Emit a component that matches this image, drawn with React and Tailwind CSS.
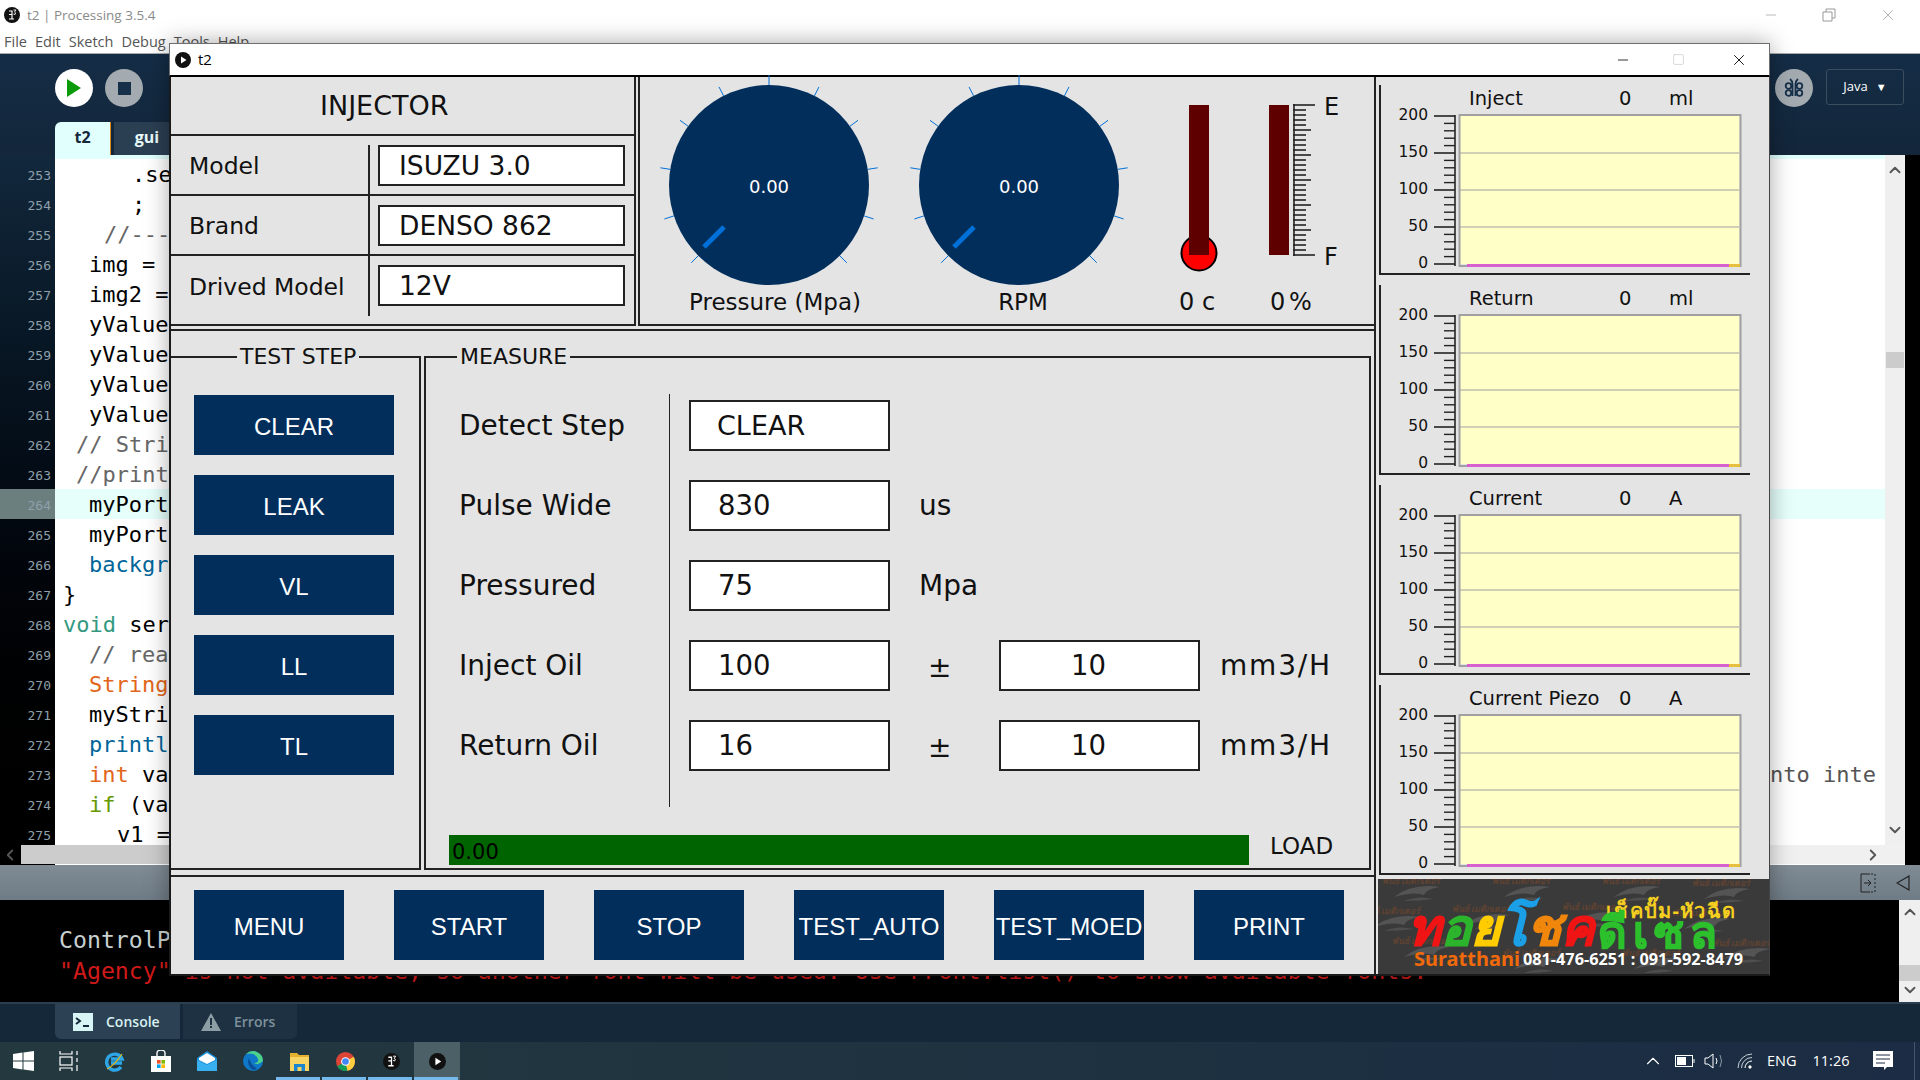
import { Minus, X, Square, ChevronUp, ChevronDown, ChevronLeft, ChevronRight } from "lucide-react";

const codeLines = [
  { n: 253, col: 5, parts: [[".setColor", "text-black"]] },
  { n: 254, col: 5, parts: [[";", "text-black"]] },
  { n: 255, col: 3, parts: [["//-----------", "text-[#666666]"]] },
  { n: 256, col: 2, parts: [["img = loadImage", "text-black"]] },
  { n: 257, col: 2, parts: [["img2 = loadImage", "text-black"]] },
  { n: 258, col: 2, parts: [["yValue1", "text-black"]] },
  { n: 259, col: 2, parts: [["yValue2", "text-black"]] },
  { n: 260, col: 2, parts: [["yValue3", "text-black"]] },
  { n: 261, col: 2, parts: [["yValue4", "text-black"]] },
  { n: 262, col: 1, parts: [["// String", "text-[#666666]"]] },
  { n: 263, col: 1, parts: [["//println", "text-[#666666]"]] },
  { n: 264, col: 2, parts: [["myPort.write", "text-black"]], active: true },
  { n: 265, col: 2, parts: [["myPort.clear", "text-black"]] },
  { n: 266, col: 2, parts: [["background", "text-[#006699]"]] },
  { n: 267, col: 0, parts: [["}", "text-black"]] },
  { n: 268, col: 0, parts: [["void", "text-[#33997e]"], [" serialEvent", "text-black"]] },
  { n: 269, col: 2, parts: [["// read", "text-[#666666]"]] },
  { n: 270, col: 2, parts: [["String", "text-[#e2661a]"], [" myString", "text-black"]] },
  { n: 271, col: 2, parts: [["myString", "text-black"]] },
  { n: 272, col: 2, parts: [["println", "text-[#006699]"]] },
  { n: 273, col: 2, parts: [["int", "text-[#e2661a]"], [" val", "text-black"]], tail: "nto inte" },
  { n: 274, col: 2, parts: [["if", "text-[#669900]"], [" (val", "text-black"]] },
  { n: 275, col: 4, parts: [["v1 = val", "text-black"]] },
];

const colPad = ["pl-[8px]", "pl-[21px]", "pl-[34px]", "pl-[49px]", "pl-[62px]", "pl-[77px]"];

function PlayBadge({ size = 16 }) {
  return (
    <svg width={size} height={size} viewBox="0 0 16 16">
      <circle cx="8" cy="8" r="8" fill="#111" />
      <path d="M6 4.5 L11.5 8 L6 11.5 Z" fill="#fff" />
    </svg>
  );
}

function P3Badge({ size = 16 }) {
  return (
    <svg width={size} height={size} viewBox="0 0 16 16">
      <circle cx="8" cy="8" r="8" fill="#111" />
      <path d="M5 4 H8 V12 M5 12 H10 M5 7.5 H8" stroke="#fff" strokeWidth="1.2" fill="none" />
      <path d="M9.5 3 H12 L10.5 5 Q12.5 5.5 11 7.5 L9.5 7" stroke="#fff" strokeWidth="0.9" fill="none" />
    </svg>
  );
}

function Code() {
  return (
    <div className="flex h-[710px] bg-black">
      <div className="w-[55px] bg-gradient-to-b from-[#12283c] to-black pt-[4px]">
        {codeLines.map((l) => (
          <div
            key={l.n}
            className={`h-[30px] pt-[9px] pr-[4px] text-right text-[13px] leading-[16px] font-['DejaVu_Sans_Mono',monospace] text-[#8fa0ab] ${l.active ? "bg-[#6b7f7f]" : ""}`}
          >
            {l.n}
          </div>
        ))}
      </div>
      <div className="w-[1850px] bg-white flex flex-col">
        <div className="flex-1 flex min-h-0">
          <div className="w-[1830px] overflow-hidden border-t-[4px] border-[#e0fffd]">
            {codeLines.map((l) => (
              <div
                key={l.n}
                className={`h-[30px] pt-[1px] flex whitespace-pre text-[22px] leading-[30px] font-['DejaVu_Sans_Mono',monospace] ${colPad[l.col]} ${l.active ? "bg-[#e6fffb]" : ""}`}
              >
                {l.parts.map(([t, c], i) => (
                  <span key={i} className={c}>{t}</span>
                ))}
                {l.tail && <span className="ml-auto w-[115px] text-[#555555]">{l.tail}</span>}
              </div>
            ))}
          </div>
          <div className="w-[20px] shrink-0 bg-[#efefef] flex flex-col items-center justify-between py-[6px] relative">
            <ChevronUp size={18} strokeWidth={2.5} className="text-[#555]" />
            <div className="absolute top-[197px] w-[18px] h-[16px] bg-[#cccccc]" />
            <ChevronDown size={18} strokeWidth={2.5} className="text-[#555]" />
          </div>
        </div>
        <div className="h-[20px] bg-[#f0f0f0] flex items-center justify-between border-b border-white">
          <div className="flex items-center h-full">
            <ChevronLeft size={18} strokeWidth={2.5} className="text-[#555] -ml-[54px] mr-[36px] relative z-10" />
            <div className="w-[800px] h-full bg-[#cccccc] -ml-[34px]" />
          </div>
          <ChevronRight size={18} strokeWidth={2.5} className="text-[#555] mr-[23px]" />
        </div>
      </div>
    </div>
  );
}

function Ide() {
  return (
    <div className="flex flex-col h-[1080px]">
      <div className="h-[30px] bg-white flex items-center pl-[4px] gap-[7px]">
        <P3Badge />
        <span className="text-[13.5px] text-[#8a8a8a] font-['Open_Sans',sans-serif]">t2 | Processing 3.5.4</span>
        <div className="ml-auto flex items-center text-[#999]">
          <Minus size={16} strokeWidth={1} className="mr-[43px]" />
          <svg width="14" height="14" viewBox="0 0 14 14" className="mr-[43px]" fill="none" stroke="#999">
            <path d="M1 4 H10 V13 H1 Z M4 4 V1 H13 V10 H10" />
          </svg>
          <X size={18} strokeWidth={1} className="mr-[23px]" />
        </div>
      </div>
      <div className="h-[24px] bg-white border-b border-[#aaaaaa] flex items-center pl-[4px] gap-[8px] text-[14.5px] text-[#555] font-['Open_Sans',sans-serif]">
        <span>File</span><span>Edit</span><span>Sketch</span><span>Debug</span><span>Tools</span><span>Help</span>
      </div>
      <div className="h-[101px] bg-gradient-to-b from-[#142d46] to-[#13263a] flex flex-col">
        <div className="flex-1 flex items-start pt-[15px] pl-[55px]">
          <div className="w-[38px] h-[38px] rounded-full bg-white flex items-center justify-center">
            <svg width="14" height="18" viewBox="0 0 14 18"><path d="M0 0 L14 9 L0 18 Z" fill="#0a9a0a" /></svg>
          </div>
          <div className="ml-[12px] w-[38px] h-[38px] rounded-full bg-[#a3abb1] flex items-center justify-center">
            <div className="w-[13px] h-[13px] bg-[#16304a]" />
          </div>
          <div className="ml-auto w-[38px] h-[38px] rounded-full bg-[#a3abb1] flex items-center justify-center mr-[13px]">
            <svg width="24" height="24" viewBox="0 0 24 24" fill="none" stroke="#16304a" strokeWidth="1.8">
              <circle cx="6.5" cy="10" r="2.8" /><circle cx="6.5" cy="17" r="2.8" /><circle cx="17.5" cy="10" r="2.8" /><circle cx="17.5" cy="17" r="2.8" />
              <path d="M8 3 Q10.5 5 10.5 8 V20 M16 3 Q13.5 5 13.5 8 V20" />
            </svg>
          </div>
          <div className="w-[78px] h-[36px] mr-[16px] border border-[#3c4e5e] rounded-[3px] flex items-center justify-center gap-[8px] text-white text-[13px] font-['Open_Sans',sans-serif]">
            Java <span className="text-[11px]">▼</span>
          </div>
        </div>
        <div className="h-[33px] flex pl-[55px] gap-[3px] text-[16px] font-bold font-['Open_Sans',sans-serif]">
          <div className="w-[56px] bg-[#e0fffd] rounded-tl-[6px] border-r border-[#e2861a] text-center leading-[30px] text-[#15283a]">t2</div>
          <div className="w-[66px] bg-[#2a3f52] text-center leading-[30px] text-[#e8fafa]">gui</div>
        </div>
      </div>
      <Code />
      <div className="h-[35px] bg-gradient-to-b from-[#7f8b95] to-[#6f7b85] flex items-center justify-end pr-[10px] gap-[20px]">
        <svg width="16" height="20" viewBox="0 0 16 20" fill="none" stroke="#222" strokeWidth="1">
          <path d="M10 1 H1 V19 H10" /><path d="M11 1 H15 V19 H11" strokeDasharray="2 2" /><path d="M4 10 H11 M8 7 L11 10 L8 13" />
        </svg>
        <svg width="14" height="16" viewBox="0 0 14 16" fill="none" stroke="#222" strokeWidth="1.2"><path d="M13 1 V15 L1 8 Z" /></svg>
      </div>
      <div className="h-[102px] bg-black flex">
        <div className="flex-1 pl-[59px] pt-[24px] text-[23.2px] leading-[31px] whitespace-pre font-['DejaVu_Sans_Mono',monospace] overflow-hidden">
          <div className="text-[#c8d0d0]">ControlP5 2.2.6 infos, comments, questions at http://www.sojamo.de/libraries/controlP5</div>
          <div className="text-[#d01a1a]">"Agency" is not available, so another font will be used. Use PFont.list() to show available fonts.</div>
        </div>
        <div className="w-[21px] bg-[#efefef] flex flex-col items-center justify-between py-[3px] relative">
          <ChevronUp size={18} strokeWidth={2.5} className="text-[#555]" />
          <div className="absolute top-[65px] w-[21px] h-[16px] bg-[#cccccc]" />
          <ChevronDown size={18} strokeWidth={2.5} className="text-[#555]" />
        </div>
      </div>
      <div className="h-[40px] bg-[#15283a] border-t-[2px] border-[#2a3f50] pl-[55px] flex gap-[3px] font-['Open_Sans',sans-serif] text-[14px]">
        <div className="w-[125px] h-[35px] bg-[#2c4254] rounded-bl-[6px] flex items-center pl-[18px] gap-[13px] text-[#d8f0f0] font-semibold">
          <svg width="20" height="18" viewBox="0 0 20 18">
            <rect width="20" height="18" fill="#d8f5f5" />
            <path d="M3 5 L7 8 L3 11 M10 13 H16" stroke="#15283a" strokeWidth="2" fill="none" />
          </svg>
          Console
        </div>
        <div className="w-[114px] h-[35px] bg-[#1d3142] rounded-br-[6px] flex items-center pl-[18px] gap-[13px] text-[#7f919c] font-semibold">
          <svg width="20" height="18" viewBox="0 0 20 18">
            <path d="M10 0 L20 18 H0 Z" fill="#8c9da3" />
            <rect x="9" y="5" width="2" height="7" fill="#1d3142" /><rect x="9" y="13" width="2" height="2" fill="#1d3142" />
          </svg>
          Errors
        </div>
      </div>
      <Taskbar />
    </div>
  );
}

function Cell({ children, on, active }) {
  return (
    <div className={`w-[46px] h-[38px] flex items-center justify-center relative ${active ? "bg-[#4c6068]" : ""}`}>
      {children}
      {on && <div className="absolute bottom-0 left-0 right-[2px] h-[3px] bg-[#76b9ed]" />}
    </div>
  );
}

function Taskbar() {
  return (
    <div className="h-[38px] bg-gradient-to-r from-[#24393f] via-[#1e3240] to-[#1b2c44] flex items-center">
      <Cell>
        <svg width="21" height="20" viewBox="0 0 21 20" fill="#fff">
          <path d="M0 3 L9.5 1.6 V9.5 H0 Z M10.5 1.4 L21 0 V9.5 H10.5 Z M0 10.5 H9.5 V18.4 L0 17 Z M10.5 10.5 H21 V20 L10.5 18.6 Z" />
        </svg>
      </Cell>
      <Cell>
        <svg width="20" height="20" viewBox="0 0 20 20" fill="none" stroke="#fff" strokeWidth="1.2">
          <path d="M1 0 V3 H13 V0 M1 20 V17 H13 V20" /><rect x="1" y="6" width="12" height="8" /><path d="M18 0 V4 M18 7 V11 M18 14 V20" />
        </svg>
      </Cell>
      <Cell>
        <svg width="20" height="22" viewBox="0 0 20 22">
          <path d="M16 17 A8 8 0 1 1 17 9 H6 M6 13 H17" fill="none" stroke="#2ea6e6" strokeWidth="3.4" />
          <path d="M2 19 Q9 16 17 4" fill="none" stroke="#e8b90f" strokeWidth="1.2" />
        </svg>
      </Cell>
      <Cell>
        <svg width="20" height="22" viewBox="0 0 20 22">
          <path d="M6 7 V3 A4 3 0 0 1 14 3 V7" fill="none" stroke="#fff" strokeWidth="1.4" />
          <rect y="6" width="20" height="16" fill="#fff" />
          <rect x="6" y="10" width="3.6" height="3.6" fill="#f25022" /><rect x="10.4" y="10" width="3.6" height="3.6" fill="#7fba00" />
          <rect x="6" y="14.4" width="3.6" height="3.6" fill="#00a4ef" /><rect x="10.4" y="14.4" width="3.6" height="3.6" fill="#ffb900" />
        </svg>
      </Cell>
      <Cell>
        <svg width="20" height="20" viewBox="0 0 20 20">
          <path d="M0 7 L10 0 L20 7 V20 H0 Z" fill="#1b8fd8" />
          <path d="M2 7 L10 2 L18 7 V9 L10 13 L2 9 Z" fill="#fff" />
          <path d="M0 9 L10 14 L20 9 V20 H0 Z" fill="#39b0f0" />
        </svg>
      </Cell>
      <Cell>
        <svg width="20" height="20" viewBox="0 0 20 20">
          <circle cx="10" cy="10" r="10" fill="#0f78c8" />
          <path d="M20 10 A10 10 0 0 0 3 3 Q12 1 15 8 Q16 12 11 12 Q15 15 20 10 Z" fill="#4cd08a" />
          <path d="M10 19 Q3 14 6 7 Q8 15 14 17 Q12 19 10 19 Z" fill="#0a4f96" />
        </svg>
      </Cell>
      <Cell on>
        <svg width="19" height="19" viewBox="0 0 19 19">
          <path d="M0 1 H7 L9 3 H19 V6 H0 Z" fill="#e5b12e" />
          <rect y="5" width="19" height="14" fill="#f7d565" />
          <rect x="4" y="12" width="11" height="7" fill="#1a86d0" /><rect x="7.5" y="15" width="4" height="4" fill="#f7d565" />
        </svg>
      </Cell>
      <Cell on>
        <svg width="19" height="19" viewBox="0 0 20 20">
          <circle cx="10" cy="10" r="10" fill="#db4437" />
          <path d="M10 10 L1.4 15 A10 10 0 0 0 12 19.8 Z" fill="#0f9d58" />
          <path d="M10 10 L18.6 5 A10 10 0 0 1 12 19.8 Z" fill="#ffcd40" />
          <circle cx="10" cy="10" r="4.6" fill="#fff" /><circle cx="10" cy="10" r="3.5" fill="#4285f4" />
        </svg>
      </Cell>
      <Cell on><P3Badge size={17} /></Cell>
      <Cell on active><PlayBadge size={17} /></Cell>
      <div className="ml-auto flex items-center h-full text-white font-['Open_Sans',sans-serif] text-[14.5px] relative w-[281px]">
        <div className="w-[28px] flex justify-center"><ChevronUp size={22} strokeWidth={1.2} /></div>
        <svg width="20" height="12" viewBox="0 0 20 12" className="ml-[8px]" fill="none" stroke="#fff">
          <rect x="0.5" y="0.5" width="17" height="11" /><rect x="2" y="2" width="9" height="8" fill="#fff" stroke="none" /><path d="M19 4 V8" />
        </svg>
        <svg width="20" height="16" viewBox="0 0 20 16" className="ml-[9px]" fill="none" stroke="#fff">
          <path d="M1 5 H4 L9 1 V15 L4 11 H1 Z" /><path d="M12 5 Q14 8 12 11" /><path d="M16 2 Q19 8 16 14" stroke="#8899a8" />
        </svg>
        <svg width="16" height="16" viewBox="0 0 16 16" className="ml-[13px]" fill="none" stroke="#fff">
          <path d="M1 15 A14 14 0 0 1 15 1 M4.5 15 A10.5 10.5 0 0 1 15 4.5" stroke="#c8d0d8" /><path d="M8 15 A7 7 0 0 1 15 8" /><circle cx="13" cy="14" r="1.2" fill="#fff" />
        </svg>
        <span className="ml-[14px]">ENG</span>
        <span className="ml-[16px]">11:26</span>
        <svg width="20" height="20" viewBox="0 0 20 20" className="ml-[23px]">
          <path d="M0 0 H20 V16 H14 L11 19 V16 H0 Z" fill="#fff" />
          <path d="M3 4 H17 M3 8 H17 M3 12 H12" stroke="#1b2c44" strokeWidth="1.2" />
        </svg>
        <div className="absolute right-[5px] top-0 bottom-0 w-px bg-[#44566a]" />
      </div>
    </div>
  );
}

function Dial({ label, labelPad }) {
  const ticks = [];
  for (let i = 0; i < 11; i++) {
    const a = ((-135 + i * 27) * Math.PI) / 180;
    ticks.push(
      <line
        key={i}
        x1={120 + 100 * Math.sin(a)}
        y1={108 - 100 * Math.cos(a)}
        x2={120 + 110 * Math.sin(a)}
        y2={108 - 110 * Math.cos(a)}
        stroke="#0170d8"
        strokeWidth="1"
      />
    );
  }
  return (
    <div className="w-[240px]">
      <svg width="240" height="213" viewBox="0 0 240 213" className="block overflow-visible">
        {ticks}
        <circle cx="120" cy="108" r="100" fill="#022e5c" />
        <line x1="75" y1="150" x2="55" y2="170" stroke="#0170d8" strokeWidth="5" />
        <text x="120" y="116" textAnchor="middle" fill="#fff" fontSize="18" className="font-['DejaVu_Sans',sans-serif]">0.00</text>
      </svg>
      <div className={`text-center text-[23px] leading-[24px] ${labelPad}`}>{label}</div>
    </div>
  );
}

function Thermo() {
  return (
    <div className="w-[60px]">
      <svg width="60" height="213" viewBox="0 0 60 213" className="block">
        <circle cx="29" cy="176" r="17.5" fill="#ff0000" stroke="#000" strokeWidth="2" />
        <rect x="19" y="28" width="20" height="150" fill="#5f0000" />
      </svg>
      <div className="pl-[9px] text-[24px] leading-[24px] whitespace-pre">0 c</div>
    </div>
  );
}

function Tank() {
  const marks = [];
  for (let i = 0; i <= 30; i++) {
    const x2 = i % 30 === 0 ? 55 : i % 5 === 0 ? 51 : 46;
    marks.push(<line key={i} x1="33" x2={x2} y1={28 + i * 5} y2={28 + i * 5} stroke="#222" strokeWidth="1.6" />);
  }
  return (
    <div className="w-[85px]">
      <svg width="85" height="213" viewBox="0 0 85 213" className="block">
        <rect x="9" y="28" width="20" height="150" fill="#5f0000" />
        <line x1="34" x2="34" y1="27" y2="179" stroke="#222" strokeWidth="1.6" />
        {marks}
        <text x="64" y="38" fontSize="24" fill="#111" className="font-['DejaVu_Sans',sans-serif]">E</text>
        <text x="64" y="188" fontSize="24" fill="#111" className="font-['DejaVu_Sans',sans-serif]">F</text>
      </svg>
      <div className="pl-[10px] text-[24px] leading-[24px] whitespace-pre tracking-[-2px]">0 %</div>
    </div>
  );
}

function Injector() {
  const rows = [
    ["Model", "ISUZU 3.0", "h-[60px]", "mt-[9px] h-[49px]"],
    ["Brand", "DENSO 862", "h-[60px]", "h-[58px] pt-[4px]"],
    ["Drived Model", "12V", "h-[69px]", "h-[60px] pt-[4px]"],
  ];
  return (
    <div className="w-[465px] border-r-2 border-b-2 border-[#222]">
      <div className="h-[59px] border-b-2 border-[#222] pl-[149px] text-[27px] leading-[58px]">INJECTOR</div>
      {rows.map(([label, value, h, divider], i) => (
        <div key={label} className={`${h} flex items-start ${i < 2 ? "border-b-2 border-[#222]" : ""}`}>
          <div className={`w-[199px] ${divider} border-r-2 border-[#222] pl-[18px] text-[23.5px] flex items-center`}>
            <span className={i === 0 ? "mb-[5px]" : ""}>{label}</span>
          </div>
          <div className="ml-[8px] mt-[9px] w-[247px] h-[41px] bg-white border-2 border-[#222] pl-[19px] text-[26.5px] leading-[38px]">
            {value}
          </div>
        </div>
      ))}
    </div>
  );
}

function Gauges() {
  return (
    <div className="flex-1 ml-[2px] border-l-2 border-b-2 border-[#222] flex pl-[9px]">
      <Dial label="Pressure (Mpa)" labelPad="pl-[12px]" />
      <div className="ml-[10px]"><Dial label="RPM" labelPad="pl-[8px]" /></div>
      <div className="ml-[31px]"><Thermo /></div>
      <div className="ml-[30px]"><Tank /></div>
    </div>
  );
}

function TestStep() {
  return (
    <fieldset className="w-[250px] h-[526px] border-t-2 border-r-2 border-b-2 border-[#222]">
      <legend className="ml-[66px] px-[3px] text-[22px] leading-[26px]">TEST STEP</legend>
      <div className="pl-[23px] pt-[25px] flex flex-col gap-[20px]">
        {["CLEAR", "LEAK", "VL", "LL", "TL"].map((t) => (
          <div key={t} className="w-[200px] h-[60px] bg-[#022e5c] text-white text-center leading-[63px] text-[24px] font-['Liberation_Sans',sans-serif]">
            {t}
          </div>
        ))}
      </div>
    </fieldset>
  );
}

function Box({ children, pad, size = "text-[27.5px]" }) {
  return (
    <div className={`w-[201px] h-[51px] shrink-0 bg-white border-2 border-[#222] leading-[47px] ${size} ${pad}`}>{children}</div>
  );
}

function Measure() {
  const labels = ["Detect Step", "Pulse Wide", "Pressured", "Inject Oil", "Return Oil"];
  return (
    <fieldset className="w-[947px] h-[526px] ml-[3px] border-2 border-[#222]">
      <legend className="ml-[31px] px-[3px] text-[22px] leading-[26px]">MEASURE</legend>
      <div className="flex pt-[24px]">
        <div className="w-[244px] h-[413px] border-r-[1.5px] border-[#222] pl-[33px] pt-[6px] flex flex-col gap-[30px]">
          {labels.map((l) => (
            <div key={l} className="h-[50px] text-[28px] leading-[52px]">{l}</div>
          ))}
        </div>
        <div className="pl-[19px] pt-[6px] flex flex-col gap-[29px] text-[28px]">
          <Box pad="pl-[26px]" size="text-[27px]">CLEAR</Box>
          <div className="flex items-center h-[51px]">
            <Box pad="pl-[27px]">830</Box><span className="ml-[29px]">us</span>
          </div>
          <div className="flex items-center h-[51px]">
            <Box pad="pl-[27px]">75</Box><span className="ml-[29px]">Mpa</span>
          </div>
          {["100", "16"].map((v) => (
            <div key={v} className="flex items-center h-[51px]">
              <Box pad="pl-[27px]">{v}</Box>
              <span className="w-[109px] pl-[38px] leading-[51px] pt-[4px]">±</span>
              <Box pad="pl-[70px]">10</Box>
              <span className="ml-[20px] whitespace-pre tracking-[1.8px]">mm3/H</span>
            </div>
          ))}
        </div>
      </div>
      <div className="flex items-center mt-[28px] pl-[23px]">
        <div className="w-[800px] h-[30px] bg-[#006400] text-black text-[21px] leading-[30px] pl-[3px] pt-[2px]">0.00</div>
        <span className="ml-[21px] text-[23px] -mt-[8px]">LOAD</span>
      </div>
    </fieldset>
  );
}

function Chart({ title, unit }) {
  const marks = [];
  for (let i = 0; i <= 20; i++) {
    const major = i % 5 === 0;
    const y = 1 + i * 7.4;
    marks.push(<line key={i} x1={major ? 53 : 63} x2="74" y1={y} y2={y} stroke="#222" strokeWidth={major ? 1.6 : 1.4} />);
  }
  const labels = [200, 150, 100, 50, 0];
  return (
    <div className="w-[371px] h-[190px] border-l-2 border-b-2 border-[#222] mb-[10px]">
      <div className="h-[30px] flex items-end pl-[88px] pb-[3px] text-[19.5px] leading-[27px] whitespace-pre">
        <span className="w-[150px]">{title}</span>
        <span className="w-[50px]">0</span>
        <span>{unit}</span>
      </div>
      <svg width="365" height="155" viewBox="0 0 365 155" className="block overflow-visible">
        {labels.map((v, i) => (
          <text key={v} x="47" y={4.5 + i * 37} textAnchor="end" fontSize="15.5" fill="#111" className="font-['DejaVu_Sans',sans-serif]">{v}</text>
        ))}
        {marks}
        <line x1="74" x2="74" y1="0" y2="151" stroke="#222" strokeWidth="1.6" />
        <rect x="78.5" y="1" width="280" height="148" fill="#ffffc8" />
        {[37, 74, 111].map((d) => (
          <line key={d} x1="79" x2="358" y1={1 + d} y2={1 + d} stroke="#a0a0a0" strokeWidth="1" />
        ))}
        <rect x="78.5" y="0" width="281" height="151" fill="none" stroke="#a0a0a0" strokeWidth="2" />
        <rect x="86" y="149" width="262" height="3" fill="#d860d0" />
        <rect x="348" y="149" width="11" height="3" fill="#e8c040" />
      </svg>
    </div>
  );
}

function LogoPattern() {
  const spots = [
    [40, 14], [150, 14], [260, 14], [350, 16],
    [20, 44], [110, 42], [220, 40], [330, 46],
    [50, 74], [160, 86], [280, 86], [370, 76],
  ];
  return (
    <svg width="391" height="95" viewBox="0 0 391 95" className="absolute inset-0">
      {spots.map(([x, y], i) => (
        <g key={i} transform={`translate(${x} ${y})`}>
          <path d="M-24 4 Q-6 -10 22 -6 Q8 -4 6 2 Q-4 -2 -24 4 Z" fill="#545454" />
          <path d="M-14 8 Q0 2 16 6 Q2 8 -14 8 Z" fill="#4e4e4e" />
          <text x="-36" y="-9" fontSize="9" fontStyle="italic" fill="#5e4232" fontFamily="'Noto Sans','DejaVu Sans',sans-serif">พันธ์ เมติกเตอร์</text>
        </g>
      ))}
    </svg>
  );
}

function Logo() {
  const big = [
    ["ท", "text-[#f01414]"], ["อ", "text-[#2cb52c]"], ["ย", "text-[#ffcc00]"], ["โ", "text-[#1ba0e8]"], ["ช", "text-[#f0860c]"], ["ค", "text-[#f01414]"],
  ];
  return (
    <div className="relative h-[95px] w-[391px] bg-[#3a3a3a] font-['Noto_Sans','DejaVu_Sans',sans-serif] font-bold overflow-hidden">
      <LogoPattern />
      <div className="relative flex pl-[30px] pt-[14px] h-[71px] whitespace-pre">
        <div className="flex items-end mt-[4px] h-[57px] text-[50px] leading-[56px] italic [-webkit-text-stroke:1.5px_currentColor]">
          {big.map(([t, c], i) => (
            <span key={i} className={c}>{t}</span>
          ))}
        </div>
        <div className="flex flex-col ml-[4px] w-[150px]">
          <div className="ml-[8px] mt-[6px] h-[10px] text-[#f5d020] text-[20px] leading-[24px] tracking-[1.3px]">เช็คปั๊ม-หัวฉีด</div>
          <div className="h-[37px] text-[#2cc02c] text-[44px] leading-[44px] tracking-[6px] [-webkit-text-stroke:1px_currentColor]">ดีเซล</div>
        </div>
      </div>
      <div className="relative flex items-center gap-[3px] pl-[36px] h-[18px] whitespace-pre">
        <span className="text-[#f06a0c] text-[20px] leading-[18px]">Suratthani</span>
        <span className="text-white text-[16.3px] leading-[18px]">081-476-6251 : 091-592-8479</span>
      </div>
    </div>
  );
}

function AppWindow() {
  return (
    <div className="absolute left-[169px] top-[43px] w-[1601px] h-[933px] shadow-[0_0_22px_rgba(0,0,0,0.35)] flex flex-col">
      <div className="h-[35px] bg-white border-t border-l border-r border-[#6e6e6e] border-b-2 border-b-black flex items-center pl-[5px] gap-[7px] text-[15px] font-['Open_Sans',sans-serif]">
        <PlayBadge />
        <span>t2</span>
        <div className="ml-auto flex items-center">
          <Minus size={16} strokeWidth={1.2} className="mr-[41px]" />
          <Square size={13} strokeWidth={1} className="mr-[45px] text-[#bbb]" />
          <X size={18} strokeWidth={1.2} className="mr-[21px]" />
        </div>
      </div>
      <div className="flex-1 flex bg-[#e4e4e4] border-l-2 border-r border-b-2 border-[#1a1a1a] border-r-[#444] text-[#111] font-['DejaVu_Sans',sans-serif]">
        <div className="w-[1205px] border-r-2 border-[#222] flex flex-col">
          <div className="h-[249px] flex">
            <Injector />
            <Gauges />
          </div>
          <div className="h-[546px] mt-[3px] border-t-2 border-[#222] pt-[13px] overflow-hidden">
            <div className="flex">
              <TestStep />
              <Measure />
            </div>
          </div>
          <div className="flex-1 border-t-2 border-[#222] flex gap-[50px] pl-[23px] pt-[13px]">
            {["MENU", "START", "STOP", "TEST_AUTO", "TEST_MOED", "PRINT"].map((t) => (
              <div key={t} className="w-[150px] h-[70px] bg-[#022e5c] text-white text-center leading-[73px] text-[24px] font-['Liberation_Sans',sans-serif]">
                {t}
              </div>
            ))}
          </div>
        </div>
        <div className="flex-1 flex flex-col pt-[8px] pl-[3px]">
          <Chart title="Inject" unit="ml" />
          <Chart title="Return" unit="ml" />
          <Chart title="Current" unit="A" />
          <Chart title="Current Piezo" unit="A" />
          <div className="-ml-[1px] -mt-[6px]"><Logo /></div>
        </div>
      </div>
    </div>
  );
}

export default function App() {
  return (
    <div className="relative w-[1920px] h-[1080px] overflow-hidden bg-white">
      <Ide />
      <AppWindow />
    </div>
  );
}
